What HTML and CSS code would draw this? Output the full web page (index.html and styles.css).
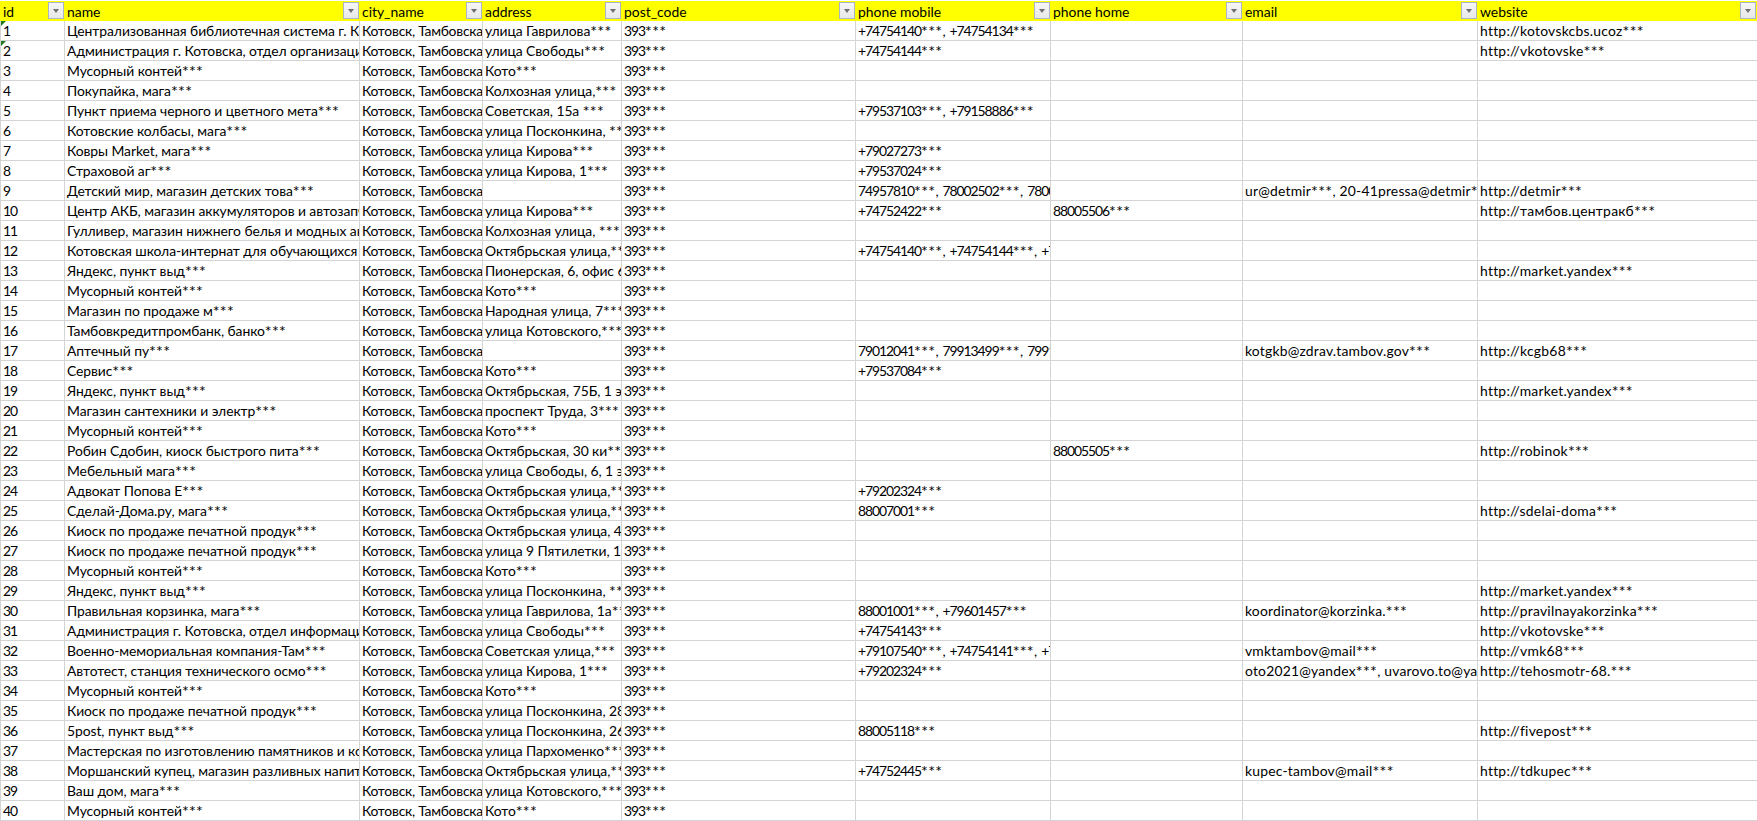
FILE: index.html
```html
<!DOCTYPE html>
<html lang="ru">
<head>
<meta charset="utf-8">
<title>Таблица организаций</title>
<link rel="stylesheet" href="styles.css">
</head>
<body>
<table class="sheet">
<colgroup><col class="c-id"><col class="c-name"><col class="c-city"><col class="c-addr"><col class="c-post"><col class="c-mob"><col class="c-home"><col class="c-mail"><col class="c-web"></colgroup>
<thead>
<tr>
<th><div class="hd"><span>id</span><i class="flt"></i></div></th>
<th><div class="hd"><span>name</span><i class="flt"></i></div></th>
<th><div class="hd"><span>city_name</span><i class="flt"></i></div></th>
<th><div class="hd"><span>address</span><i class="flt"></i></div></th>
<th><div class="hd"><span>post_code</span><i class="flt"></i></div></th>
<th><div class="hd"><span>phone mobile</span><i class="flt"></i></div></th>
<th><div class="hd"><span>phone home</span><i class="flt"></i></div></th>
<th><div class="hd"><span>email</span><i class="flt"></i></div></th>
<th><div class="hd"><span>website</span><i class="flt"></i></div></th>
</tr>
</thead>
<tbody>
<tr><td class="note">1</td><td>Централизованная библиотечная система г. Котовска<span class="m">***</span></td><td>Котовск, Тамбовская<span class="m">***</span></td><td>улица Гаврилова<span class="m">***</span></td><td>393<span class="m">***</span></td><td>+74754140<span class="m">***</span>, +74754134<span class="m">***</span></td><td></td><td></td><td>http://kotovskcbs.ucoz<span class="m">***</span></td></tr>
<tr><td class="note">2</td><td>Администрация г. Котовска, отдел организации<span class="m">***</span></td><td>Котовск, Тамбовская<span class="m">***</span></td><td>улица Свободы<span class="m">***</span></td><td>393<span class="m">***</span></td><td>+74754144<span class="m">***</span></td><td></td><td></td><td>http://vkotovske<span class="m">***</span></td></tr>
<tr><td>3</td><td>Мусорный контей<span class="m">***</span></td><td>Котовск, Тамбовская<span class="m">***</span></td><td>Кото<span class="m">***</span></td><td>393<span class="m">***</span></td><td></td><td></td><td></td><td></td></tr>
<tr><td>4</td><td>Покупайка, мага<span class="m">***</span></td><td>Котовск, Тамбовская<span class="m">***</span></td><td>Колхозная улица,<span class="m">***</span></td><td>393<span class="m">***</span></td><td></td><td></td><td></td><td></td></tr>
<tr><td>5</td><td>Пункт приема черного и цветного мета<span class="m">***</span></td><td>Котовск, Тамбовская<span class="m">***</span></td><td>Советская, 15а <span class="m">***</span></td><td>393<span class="m">***</span></td><td>+79537103<span class="m">***</span>, +79158886<span class="m">***</span></td><td></td><td></td><td></td></tr>
<tr><td>6</td><td>Котовские колбасы, мага<span class="m">***</span></td><td>Котовск, Тамбовская<span class="m">***</span></td><td>улица Посконкина, <span class="m">***</span></td><td>393<span class="m">***</span></td><td></td><td></td><td></td><td></td></tr>
<tr><td>7</td><td>Ковры Market, мага<span class="m">***</span></td><td>Котовск, Тамбовская<span class="m">***</span></td><td>улица Кирова<span class="m">***</span></td><td>393<span class="m">***</span></td><td>+79027273<span class="m">***</span></td><td></td><td></td><td></td></tr>
<tr><td>8</td><td>Страховой аг<span class="m">***</span></td><td>Котовск, Тамбовская<span class="m">***</span></td><td>улица Кирова, 1<span class="m">***</span></td><td>393<span class="m">***</span></td><td>+79537024<span class="m">***</span></td><td></td><td></td><td></td></tr>
<tr><td>9</td><td>Детский мир, магазин детских това<span class="m">***</span></td><td>Котовск, Тамбовская<span class="m">***</span></td><td></td><td>393<span class="m">***</span></td><td>74957810<span class="m">***</span>, 78002502<span class="m">***</span>, 78002<span class="m">***</span></td><td></td><td>ur@detmir<span class="m">***</span>, 20-41pressa@detmir<span class="m">***</span></td><td>http://detmir<span class="m">***</span></td></tr>
<tr><td>10</td><td>Центр АКБ, магазин аккумуляторов и автозапчастей<span class="m">***</span></td><td>Котовск, Тамбовская<span class="m">***</span></td><td>улица Кирова<span class="m">***</span></td><td>393<span class="m">***</span></td><td>+74752422<span class="m">***</span></td><td>88005506<span class="m">***</span></td><td></td><td>http://тамбов.центракб<span class="m">***</span></td></tr>
<tr><td>11</td><td>Гулливер, магазин нижнего белья и модных аксессуаров<span class="m">***</span></td><td>Котовск, Тамбовская<span class="m">***</span></td><td>Колхозная улица, <span class="m">***</span></td><td>393<span class="m">***</span></td><td></td><td></td><td></td><td></td></tr>
<tr><td>12</td><td>Котовская школа-интернат для обучающихся с ОВЗ<span class="m">***</span></td><td>Котовск, Тамбовская<span class="m">***</span></td><td>Октябрьская улица,<span class="m">***</span></td><td>393<span class="m">***</span></td><td>+74754140<span class="m">***</span>, +74754144<span class="m">***</span>, +74754<span class="m">***</span></td><td></td><td></td><td></td></tr>
<tr><td>13</td><td>Яндекс, пункт выд<span class="m">***</span></td><td>Котовск, Тамбовская<span class="m">***</span></td><td>Пионерская, 6, офис 6<span class="m">***</span></td><td>393<span class="m">***</span></td><td></td><td></td><td></td><td>http://market.yandex<span class="m">***</span></td></tr>
<tr><td>14</td><td>Мусорный контей<span class="m">***</span></td><td>Котовск, Тамбовская<span class="m">***</span></td><td>Кото<span class="m">***</span></td><td>393<span class="m">***</span></td><td></td><td></td><td></td><td></td></tr>
<tr><td>15</td><td>Магазин по продаже м<span class="m">***</span></td><td>Котовск, Тамбовская<span class="m">***</span></td><td>Народная улица, 7<span class="m">***</span></td><td>393<span class="m">***</span></td><td></td><td></td><td></td><td></td></tr>
<tr><td>16</td><td>Тамбовкредитпромбанк, банко<span class="m">***</span></td><td>Котовск, Тамбовская<span class="m">***</span></td><td>улица Котовского,<span class="m">***</span></td><td>393<span class="m">***</span></td><td></td><td></td><td></td><td></td></tr>
<tr><td>17</td><td>Аптечный пу<span class="m">***</span></td><td>Котовск, Тамбовская<span class="m">***</span></td><td></td><td>393<span class="m">***</span></td><td>79012041<span class="m">***</span>, 79913499<span class="m">***</span>, 79913<span class="m">***</span></td><td></td><td>kotgkb@zdrav.tambov.gov<span class="m">***</span></td><td>http://kcgb68<span class="m">***</span></td></tr>
<tr><td>18</td><td>Сервис<span class="m">***</span></td><td>Котовск, Тамбовская<span class="m">***</span></td><td>Кото<span class="m">***</span></td><td>393<span class="m">***</span></td><td>+79537084<span class="m">***</span></td><td></td><td></td><td></td></tr>
<tr><td>19</td><td>Яндекс, пункт выд<span class="m">***</span></td><td>Котовск, Тамбовская<span class="m">***</span></td><td>Октябрьская, 75Б, 1 эт<span class="m">***</span></td><td>393<span class="m">***</span></td><td></td><td></td><td></td><td>http://market.yandex<span class="m">***</span></td></tr>
<tr><td>20</td><td>Магазин сантехники и электр<span class="m">***</span></td><td>Котовск, Тамбовская<span class="m">***</span></td><td>проспект Труда, 3<span class="m">***</span></td><td>393<span class="m">***</span></td><td></td><td></td><td></td><td></td></tr>
<tr><td>21</td><td>Мусорный контей<span class="m">***</span></td><td>Котовск, Тамбовская<span class="m">***</span></td><td>Кото<span class="m">***</span></td><td>393<span class="m">***</span></td><td></td><td></td><td></td><td></td></tr>
<tr><td>22</td><td>Робин Сдобин, киоск быстрого пита<span class="m">***</span></td><td>Котовск, Тамбовская<span class="m">***</span></td><td>Октябрьская, 30 ки<span class="m">***</span></td><td>393<span class="m">***</span></td><td></td><td>88005505<span class="m">***</span></td><td></td><td>http://robinok<span class="m">***</span></td></tr>
<tr><td>23</td><td>Мебельный мага<span class="m">***</span></td><td>Котовск, Тамбовская<span class="m">***</span></td><td>улица Свободы, 6, 1 эт<span class="m">***</span></td><td>393<span class="m">***</span></td><td></td><td></td><td></td><td></td></tr>
<tr><td>24</td><td>Адвокат Попова Е<span class="m">***</span></td><td>Котовск, Тамбовская<span class="m">***</span></td><td>Октябрьская улица,<span class="m">***</span></td><td>393<span class="m">***</span></td><td>+79202324<span class="m">***</span></td><td></td><td></td><td></td></tr>
<tr><td>25</td><td>Сделай-Дома.ру, мага<span class="m">***</span></td><td>Котовск, Тамбовская<span class="m">***</span></td><td>Октябрьская улица,<span class="m">***</span></td><td>393<span class="m">***</span></td><td>88007001<span class="m">***</span></td><td></td><td></td><td>http://sdelai-doma<span class="m">***</span></td></tr>
<tr><td>26</td><td>Киоск по продаже печатной продук<span class="m">***</span></td><td>Котовск, Тамбовская<span class="m">***</span></td><td>Октябрьская улица, 4<span class="m">***</span></td><td>393<span class="m">***</span></td><td></td><td></td><td></td><td></td></tr>
<tr><td>27</td><td>Киоск по продаже печатной продук<span class="m">***</span></td><td>Котовск, Тамбовская<span class="m">***</span></td><td>улица 9 Пятилетки, 1</td><td>393<span class="m">***</span></td><td></td><td></td><td></td><td></td></tr>
<tr><td>28</td><td>Мусорный контей<span class="m">***</span></td><td>Котовск, Тамбовская<span class="m">***</span></td><td>Кото<span class="m">***</span></td><td>393<span class="m">***</span></td><td></td><td></td><td></td><td></td></tr>
<tr><td>29</td><td>Яндекс, пункт выд<span class="m">***</span></td><td>Котовск, Тамбовская<span class="m">***</span></td><td>улица Посконкина, <span class="m">***</span></td><td>393<span class="m">***</span></td><td></td><td></td><td></td><td>http://market.yandex<span class="m">***</span></td></tr>
<tr><td>30</td><td>Правильная корзинка, мага<span class="m">***</span></td><td>Котовск, Тамбовская<span class="m">***</span></td><td>улица Гаврилова, 1а<span class="m">***</span></td><td>393<span class="m">***</span></td><td>88001001<span class="m">***</span>, +79601457<span class="m">***</span></td><td></td><td>koordinator@korzinka.<span class="m">***</span></td><td>http://pravilnayakorzinka<span class="m">***</span></td></tr>
<tr><td>31</td><td>Администрация г. Котовска, отдел информации<span class="m">***</span></td><td>Котовск, Тамбовская<span class="m">***</span></td><td>улица Свободы<span class="m">***</span></td><td>393<span class="m">***</span></td><td>+74754143<span class="m">***</span></td><td></td><td></td><td>http://vkotovske<span class="m">***</span></td></tr>
<tr><td>32</td><td>Военно-мемориальная компания-Там<span class="m">***</span></td><td>Котовск, Тамбовская<span class="m">***</span></td><td>Советская улица,<span class="m">***</span></td><td>393<span class="m">***</span></td><td>+79107540<span class="m">***</span>, +74754141<span class="m">***</span>, +74754<span class="m">***</span></td><td></td><td>vmktambov@mail<span class="m">***</span></td><td>http://vmk68<span class="m">***</span></td></tr>
<tr><td>33</td><td>Автотест, станция технического осмо<span class="m">***</span></td><td>Котовск, Тамбовская<span class="m">***</span></td><td>улица Кирова, 1<span class="m">***</span></td><td>393<span class="m">***</span></td><td>+79202324<span class="m">***</span></td><td></td><td>oto2021@yandex<span class="m">***</span>, uvarovo.to@yandex<span class="m">***</span></td><td>http://tehosmotr-68.<span class="m">***</span></td></tr>
<tr><td>34</td><td>Мусорный контей<span class="m">***</span></td><td>Котовск, Тамбовская<span class="m">***</span></td><td>Кото<span class="m">***</span></td><td>393<span class="m">***</span></td><td></td><td></td><td></td><td></td></tr>
<tr><td>35</td><td>Киоск по продаже печатной продук<span class="m">***</span></td><td>Котовск, Тамбовская<span class="m">***</span></td><td>улица Посконкина, 28<span class="m">***</span></td><td>393<span class="m">***</span></td><td></td><td></td><td></td><td></td></tr>
<tr><td>36</td><td>5post, пункт выд<span class="m">***</span></td><td>Котовск, Тамбовская<span class="m">***</span></td><td>улица Посконкина, 26<span class="m">***</span></td><td>393<span class="m">***</span></td><td>88005118<span class="m">***</span></td><td></td><td></td><td>http://fivepost<span class="m">***</span></td></tr>
<tr><td>37</td><td>Мастерская по изготовлению памятников и комплексов<span class="m">***</span></td><td>Котовск, Тамбовская<span class="m">***</span></td><td>улица Пархоменко<span class="m">***</span></td><td>393<span class="m">***</span></td><td></td><td></td><td></td><td></td></tr>
<tr><td>38</td><td>Моршанский купец, магазин разливных напитков<span class="m">***</span></td><td>Котовск, Тамбовская<span class="m">***</span></td><td>Октябрьская улица,<span class="m">***</span></td><td>393<span class="m">***</span></td><td>+74752445<span class="m">***</span></td><td></td><td>kupec-tambov@mail<span class="m">***</span></td><td>http://tdkupec<span class="m">***</span></td></tr>
<tr><td>39</td><td>Ваш дом, мага<span class="m">***</span></td><td>Котовск, Тамбовская<span class="m">***</span></td><td>улица Котовского,<span class="m">***</span></td><td>393<span class="m">***</span></td><td></td><td></td><td></td><td></td></tr>
<tr><td>40</td><td>Мусорный контей<span class="m">***</span></td><td>Котовск, Тамбовская<span class="m">***</span></td><td>Кото<span class="m">***</span></td><td>393<span class="m">***</span></td><td></td><td></td><td></td><td></td></tr>
</tbody>
</table>
</body>
</html>
```
FILE: styles.css
```css
html, body {
  margin: 0;
  background: #fff;
  overflow: hidden;
}
.sheet {
  table-layout: fixed;
  width: 1757px;
  border-collapse: separate;
  border-spacing: 0;
  font-family: "Lato", "Noto Sans", sans-serif;
  font-size: 13.9px;
  color: #000;
  margin-top: 1px;
}
.c-id { width: 65px; }
.c-name { width: 295px; }
.c-city { width: 123px; }
.c-addr { width: 139px; }
.c-post { width: 234px; }
.c-mob { width: 195px; }
.c-home { width: 192px; }
.c-mail { width: 235px; }
.c-web { width: 279px; }

th {
  height: 20px;
  padding: 0;
  background: #ffff00;
  font-weight: 400;
  text-align: left;
  overflow: hidden;
}
.hd {
  display: flex;
  align-items: center;
  justify-content: space-between;
  height: 20px;
  padding-left: 2px;
}
th:first-child .hd { padding-left: 3px; }
.flt {
  display: flex;
  align-items: center;
  justify-content: center;
  align-self: flex-start;
  box-sizing: border-box;
  width: 16px;
  height: 17px;
  margin: 1px 1px 0 0;
  background: linear-gradient(#f6f6f6, #e8e8e8);
  border: 1px solid #a9b4c4;
}
.flt::after {
  content: "";
  border-left: 3.5px solid transparent;
  border-right: 3.5px solid transparent;
  border-top: 4px solid #707070;
}
td {
  box-sizing: border-box;
  height: 20px;
  padding: 0 0 0 2px;
  border-right: 1px solid #d4d4d4;
  border-bottom: 1px solid #d4d4d4;
  line-height: 19px;
  white-space: nowrap;
  overflow: hidden;
  vertical-align: bottom;
}
td:first-child {
  border-left: 1px solid #d4d4d4;
  position: relative;
}
td:last-child { border-right: 0; }

/* Lato runs wider on figures and narrower on Latin than the sheet's face */
td:nth-child(1), td:nth-child(5), td:nth-child(6), td:nth-child(7) {
  letter-spacing: -1.05px;
  word-spacing: 2.6px;
}
td:nth-child(2), td:nth-child(4) { letter-spacing: -0.07px; }
td:nth-child(3) { letter-spacing: -0.25px; }
td:nth-child(8) { letter-spacing: 0.2px; }
td:nth-child(9) { letter-spacing: 0.25px; }

.m {
  font-size: 16px;
  line-height: 0;
  letter-spacing: 0.3px;
  vertical-align: -1px;
}
.note::before {
  content: "";
  position: absolute;
  left: 0;
  top: 0;
  border-top: 5px solid #1f7a1f;
  border-right: 5px solid transparent;
}
```
